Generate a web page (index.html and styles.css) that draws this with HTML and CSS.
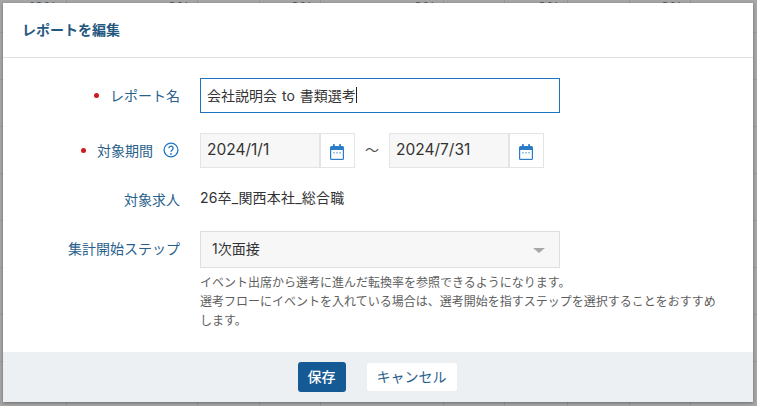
FILE: index.html
```html
<!DOCTYPE html>
<html lang="ja">
<head>
<meta charset="utf-8">
<title>レポートを編集</title>
<link rel="stylesheet" href="styles.css">
</head>
<body>
<div class="backdrop">
  <div class="cell c1"><span>10%</span></div>
  <div class="cell c2"><span>0%</span></div>
  <div class="cell c3"></div>
  <div class="cell c3b"><span>0%</span></div>
  <div class="cell c2b"><span>0%</span></div>
  <div class="cell c3b"></div>
  <div class="cell c3"><span>0%</span></div>
  <div class="cell c3"></div>
  <div class="cell c3b"><span>0%</span></div>
</div>
<section class="modal">
  <header class="modal-head">レポートを編集</header>
  <div class="modal-body">
    <div class="row row-input">
      <div class="label"><i class="req"></i><span class="label-name">レポート名</span></div>
      <div class="text-input">会社説明会 to 書類選考<span class="caret"></span></div>
    </div>
    <div class="row row-input">
      <div class="label"><i class="req req-period"></i><span>対象期間</span>
        <svg class="help-icon" viewBox="0 0 16 16" width="16" height="16"><circle cx="8" cy="8" r="6.9" fill="none" stroke="#1f74bf" stroke-width="1.3"/><path d="M5.9 6.300a2.100 2.100 0 1 1 3.300 1.700c-.8.550-1.200.9-1.200 1.800" fill="none" stroke="#1f74bf" stroke-width="1.3"/><circle cx="8" cy="11.900" r=".9" fill="#1f74bf"/></svg>
      </div>
      <div class="dates">
        <div class="date-field">
          <div class="date-value">2024/1/1</div>
          <div class="date-btn"><svg viewBox="0 0 14 16" width="14" height="16"><path d="M1.500 2h11A1.500 1.500 0 0 1 14 3.500v11a1.500 1.500 0 0 1-1.500 1.500h-11A1.500 1.500 0 0 1 0 14.500v-11A1.500 1.500 0 0 1 1.500 2z" fill="#2b7cc7"/><rect x="3" y="0" width="1.800" height="3.500" rx=".6" fill="#2b7cc7"/><rect x="9.200" y="0" width="1.800" height="3.500" rx=".6" fill="#2b7cc7"/><rect x="1.200" y="6" width="11.600" height="8.800" fill="#fff"/><rect x="3.200" y="8" width="1.500" height="1.500" fill="#7fb1de"/><rect x="6.250" y="8" width="1.500" height="1.500" fill="#7fb1de"/><rect x="9.300" y="8" width="1.500" height="1.500" fill="#7fb1de"/></svg></div>
        </div>
        <span class="tilde">〜</span>
        <div class="date-field date-field-to">
          <div class="date-value">2024/7/31</div>
          <div class="date-btn"><svg viewBox="0 0 14 16" width="14" height="16"><path d="M1.500 2h11A1.500 1.500 0 0 1 14 3.500v11a1.500 1.500 0 0 1-1.500 1.500h-11A1.500 1.500 0 0 1 0 14.500v-11A1.500 1.500 0 0 1 1.500 2z" fill="#2b7cc7"/><rect x="3" y="0" width="1.800" height="3.500" rx=".6" fill="#2b7cc7"/><rect x="9.200" y="0" width="1.800" height="3.500" rx=".6" fill="#2b7cc7"/><rect x="1.200" y="6" width="11.600" height="8.800" fill="#fff"/><rect x="3.200" y="8" width="1.500" height="1.500" fill="#7fb1de"/><rect x="6.250" y="8" width="1.500" height="1.500" fill="#7fb1de"/><rect x="9.300" y="8" width="1.500" height="1.500" fill="#7fb1de"/></svg></div>
        </div>
      </div>
    </div>
    <div class="row row-text">
      <div class="label"><span>対象求人</span></div>
      <div class="value">26卒_関西本社_総合職</div>
    </div>
    <div class="row row-select">
      <div class="label"><span>集計開始ステップ</span></div>
      <div class="select-col">
        <div class="select"><span>1次面接</span><i class="arrow"></i></div>
        <p class="hint">イベント出席から選考に進んだ転換率を参照できるようになります。<br>選考フローにイベントを入れている場合は、選考開始を指すステップを選択することをおすすめします。</p>
      </div>
    </div>
  </div>
  <footer class="modal-foot">
    <button class="btn btn-save">保存</button>
    <button class="btn btn-cancel">キャンセル</button>
  </footer>
</section>
</body>
</html>
```
FILE: styles.css
```css
* { box-sizing: border-box; }
html, body { margin: 0; height: 100%; overflow: hidden; }
body {
  position: relative;
  width: 757px;
  height: 406px;
  background: #a6a6a6 repeating-linear-gradient(to bottom, transparent 0 32px, #9a9a9a 32px 33px, transparent 33px 47px);
  font-family: Inter, "Noto Sans CJK JP", "Noto Sans", sans-serif;
  font-size: 14px;
  color: #333;
}
.backdrop {
  display: grid;
  grid-template-columns: 67px 131px 62px 61px 123px 61px 63px 62px 61px;
  height: 406px;
}
.cell {
  border-right: 1px solid #979797;
  text-align: right;
  padding-right: 7px;
  font-size: 14px;
  line-height: 16px;
  color: #4a5b6b;
}
.cell.c1 { padding-right: 9px; }
.modal {
  position: absolute;
  left: 3px;
  top: 3px;
  width: 750px;
  height: 399px;
  background: #fff;
  display: flex;
  flex-direction: column;
  box-shadow: 0 1px 3px rgba(0, 0, 0, .35);
}
.modal-head {
  height: 55px;
  flex: none;
  padding: 0 0 3px 19px;
  border-bottom: 1px solid #e2e2e2;
  display: flex;
  align-items: center;
  font-size: 14px;
  font-weight: 700;
  color: #23577f;
}
.modal-body {
  flex: 1;
  padding-top: 20px;
  display: flex;
  flex-direction: column;
  gap: 20px;
}
.row {
  display: grid;
  grid-template-columns: 177px 1fr;
  column-gap: 20px;
  align-items: center;
}
.row-select { align-items: start; }
.row-select .label { height: 36px; padding-bottom: 3px; }
.label {
  display: flex;
  justify-content: flex-end;
  align-items: center;
  color: #2a5f8c;
  font-size: 14px;
  padding-bottom: 1px;
}
.req {
  width: 5px;
  height: 5px;
  border-radius: 50%;
  background: #d0191d;
  margin-right: 11px;
}
.req-period { margin-right: 11px; }
.help-icon { margin-left: 10px; margin-right: 1px; }
.text-input {
  width: 360px;
  height: 35px;
  border: 1px solid #1f74bf;
  padding: 0 0 2px 6px;
  display: flex;
  align-items: center;
  font-size: 14px;
  word-spacing: 1px;
  color: #333;
  white-space: pre;
}
.caret {
  display: inline-block;
  width: 1px;
  height: 16px;
  background: #222;
}
.dates { display: flex; align-items: center; }
.date-field {
  display: flex;
  height: 35px;
  border: 1px solid #e4e4e4;
}
.date-value {
  width: 120px;
  background: #f7f7f7;
  border-right: 2px solid #e4e4e4;
  padding-left: 6px;
  display: flex;
  align-items: center;
  font-size: 15.5px;
  padding-bottom: 3px;
  color: #333;
}
.date-btn {
  width: 33px;
  display: flex;
  align-items: center;
  justify-content: center;
  background: #fff;
  padding: 3px 1px 0 0;
}
.tilde {
  width: 34px;
  text-align: center;
  font-size: 14px;
  color: #555;
  padding-bottom: 4px;
}
.value { font-size: 14px; line-height: 23px; color: #333; padding-bottom: 4px; height: 23px; display: flex; align-items: center; letter-spacing: .2px; }
.select-col { width: 520px; }
.select {
  width: 360px;
  height: 37px;
  background: #f7f7f7;
  border: 1px solid #dedede;
  padding: 0 14px 3px 11px;
  display: flex;
  align-items: center;
  justify-content: space-between;
  font-size: 14px;
  color: #333;
}
.arrow {
  width: 0;
  height: 0;
  border-left: 6px solid transparent;
  border-right: 6px solid transparent;
  border-top: 5px solid #a8a8a8;
  margin-top: 4px;
}
.hint {
  margin: 5px 0 0;
  font-size: 12px;
  line-height: 19px;
  color: #5e5e5e;
}
.modal-foot {
  height: 50px;
  flex: none;
  background: #ecf0f3;
  display: flex;
  align-items: center;
  justify-content: center;
  gap: 21px;
  padding-right: 2px;
}
.btn {
  font-family: inherit;
  font-size: 14px;
  border: 0;
  border-radius: 3px;
  padding: 0 0 2px;
}
.btn-save {
  width: 48px;
  height: 30px;
  background: #155a94;
  color: #fff;
  font-weight: 500;
}
.btn-cancel {
  width: 90px;
  height: 28px;
  background: #fff;
  color: #2a5f8c;
}
```
